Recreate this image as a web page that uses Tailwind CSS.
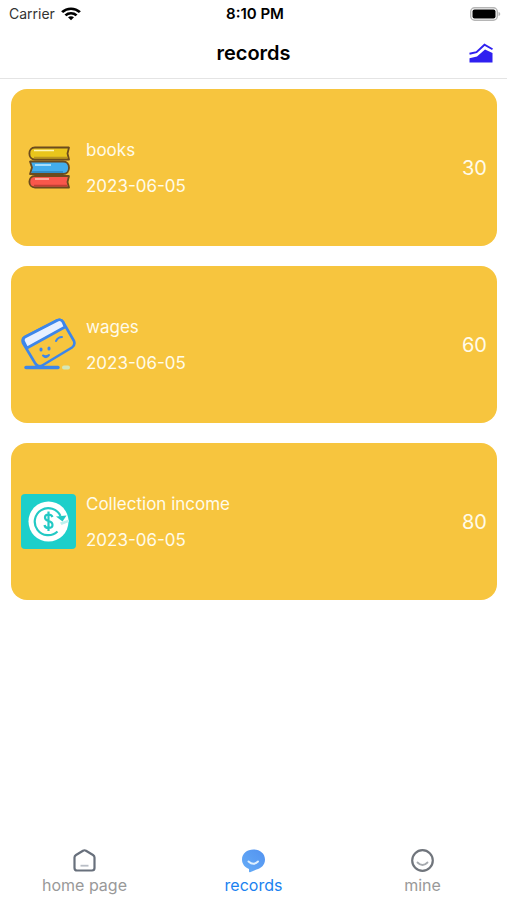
<!DOCTYPE html>
<html lang="en">
<head>
  <meta charset="UTF-8"/>
  <meta name="viewport" content="width=device-width, initial-scale=1.0"/>
  <title>records</title>
  <script src="https://cdn.jsdelivr.net/npm/@tailwindcss/browser@4"></script>
</head>
<body class="bg-white font-['Inter','Liberation_Sans',sans-serif] text-black">
  <div class="flex min-h-screen flex-col">

    <!-- Status Bar -->
    <div class="grid h-7 grid-cols-3 items-center pl-[9px] pr-[6px] pb-px text-sm">
      <div class="flex items-center gap-1.5 text-[#333]">
        <span>Carrier</span>
        <svg class="h-[14px] w-[20px]" viewBox="0 0 18 14" preserveAspectRatio="none" fill="none" stroke="#000" stroke-width="2.500">
          <path d="M1 5.200C5.500 .6 12.500 .6 17 5.200"/>
          <path d="M4 8.300C6.900 5.500 11.100 5.500 14 8.300"/>
          <path d="M6.300 10.300C7.900 8.900 10.100 8.900 11.700 10.300L9 13.200Z" fill="#000" stroke="none"/>
        </svg>
      </div>
      <div class="text-center text-[15px] font-semibold">8:10 PM</div>
      <svg class="h-[14px] w-[31px] justify-self-end" viewBox="0 0 31 14">
        <rect x=".7" y=".7" width="26.600" height="12.600" rx="4" fill="#fff" stroke="#b5b5b5" stroke-width="1.400"/>
        <rect x="2.500" y="2.500" width="23" height="9" rx="2" fill="#000"/>
        <path d="M28.500 5C30.800 5.500 30.800 8.500 28.500 9Z" fill="#b5b5b5"/>
      </svg>
    </div>

    <!-- Header -->
    <header class="grid grid-cols-[24px_1fr_24px] items-center border-b border-[#e4e4e4] px-[14px] pt-px pb-px">
      <span></span>
      <h1 class="py-2.5 text-center text-xl leading-7 font-semibold">records</h1>
      <button type="button" aria-label="Statistics">
        <svg class="h-5 w-6" viewBox="0 0 24 20">
          <path d="M.5 19.500V15.200L8 13.600L16 6.500L23.500 10V19.500Z" fill="#2f20f0"/>
          <path d="M.5 10.800L7.500 9.200L15.500 1.700L23.500 6.300" fill="none" stroke="#2f20f0" stroke-width="1.900"/>
        </svg>
      </button>
    </header>

    <!-- Records List -->
    <main class="flex flex-1 flex-col gap-5 px-[10px] py-[10px] pl-[11px]">
      <article class="flex min-h-[157px] items-center gap-2.5 rounded-2xl bg-[#f7c53e] px-2.5 text-[#fffbea]">
        <svg class="size-[55px] shrink-0" viewBox="0 0 55 55" stroke="#6b4b1e" stroke-width="1.800" stroke-linejoin="round">
          <path d="M48 7.500H14C6.500 7.500 6.500 19.500 14 19.500H48L46.500 13.500Z" fill="#e9c51c"/>
          <path d="M9 21.500H42C50 21.500 50 34 42 34H9L11 27.500Z" fill="#43adec"/>
          <path d="M48 36H14C6.500 36 6.500 47.500 14 47.500H48L46.500 42Z" fill="#f9574b"/>
          <g fill="none" stroke-width="1.500">
            <path d="M13 10.500H33" stroke="#fff6b5"/>
            <path d="M14 25H30" stroke="#c9efff"/>
            <path d="M14 39H28" stroke="#ffc4b6"/>
            <path d="M13 17.500H46" stroke="#b89423"/>
            <path d="M11 32H42" stroke="#2b84bd"/>
            <path d="M13 45.500H46" stroke="#c23f35"/>
          </g>
        </svg>
        <div class="flex flex-1 flex-col gap-3 text-[17px] leading-6">
          <h2>books</h2>
          <p>2023-06-05</p>
        </div>
        <span class="text-xl">30</span>
      </article>

      <article class="flex min-h-[157px] items-center gap-2.5 rounded-2xl bg-[#f7c53e] px-2.5 text-[#fffbea]">
        <svg class="size-[55px] shrink-0" viewBox="0 0 55 55" fill="none" stroke="#3d86ea" stroke-width="2.600" stroke-linecap="round" stroke-linejoin="round">
          <path d="M4 20L36 3.500Q40 1.500 42 5L53 24Q54.500 28 51 30.500L22 48Q17 51 14 46L2 26Q.5 22 4 20Z"/>
          <path d="M2.500 24Q2 21 4 20L36 3.500Q40 1.500 42 5L44 10L6 31Z" fill="#e8f0ff"/>
          <path d="M20 32V33M28 31V32" stroke-width="3"/>
          <path d="M22 38.500Q25.500 42 28 38Q25 40 22 38.500M35 24Q37 20 41 20" stroke-width="2"/>
          <path d="M5 50.500H37" stroke-width="3.400"/>
          <path d="M43 50.500H47" stroke="#d5e7b8" stroke-width="4"/>
        </svg>
        <div class="flex flex-1 flex-col gap-3 text-[17px] leading-6">
          <h2>wages</h2>
          <p>2023-06-05</p>
        </div>
        <span class="text-xl">60</span>
      </article>

      <article class="flex min-h-[157px] items-center gap-2.5 rounded-2xl bg-[#f7c53e] px-2.5 text-[#fffbea]">
        <svg class="size-[55px] shrink-0" viewBox="0 0 55 55" fill="none" stroke="#22c9c4" stroke-width="2.200">
          <rect width="55" height="55" rx="4" fill="#1dcfca" stroke="none"/>
          <circle cx="27.500" cy="27.500" r="20" fill="#fff" stroke="none"/>
          <path d="M36.500 37.500A13.500 13.500 0 1 1 39.500 22"/>
          <path d="M35 22.500L45.500 21.500L41.500 27.500Z" fill="#22c9c4" stroke="none"/>
          <path d="M39 28.500L48 25.500V28L40.500 31Z" fill="#bdf1ee" stroke="none"/>
          <path d="M31.500 23Q30.500 20.500 27.500 20.500Q24 20.500 24 23.500Q24 26 27.500 27Q31.500 28 31.500 31Q31.500 34 27.500 34Q24 34 23.500 31M27.500 17.500V37"/>
        </svg>
        <div class="flex flex-1 flex-col gap-3 text-[17px] leading-6">
          <h2>Collection income</h2>
          <p>2023-06-05</p>
        </div>
        <span class="text-xl">80</span>
      </article>
    </main>

    <!-- Tab Bar -->
    <nav class="grid grid-cols-3 pb-[3px] text-base leading-6 text-[#999]">
      <a href="#" class="flex flex-col items-center">
        <svg class="size-[25px]" viewBox="0 0 25 25" fill="none" stroke="#68707c" stroke-width="2.200" stroke-linejoin="round">
          <path d="M2.500 9.500Q2.500 8 4 7L11 2.700Q12.500 1.800 14 2.700L21 7Q22.500 8 22.500 9.500V20Q22.500 22.500 20 22.500H5Q2.500 22.500 2.500 20Z"/>
          <path d="M8.500 17.700H16.500" stroke="#b9bec6" stroke-width="1.800"/>
        </svg>
        home page
      </a>
      <a href="#" class="flex flex-col items-center text-[#1a82f0]" aria-current="page">
        <svg class="size-[25px]" viewBox="0 0 25 25" fill="none">
          <defs>
            <linearGradient id="bubble" x1="0" y1="1" x2="1" y2="0">
              <stop offset="0" stop-color="#66adf7"/>
              <stop offset="1" stop-color="#5292f0"/>
            </linearGradient>
          </defs>
          <path d="M12.500 1.500C19 1.500 24 5.500 24 11.500C24 17 20 20.500 15.500 21.500L9 24.300Q8 24.500 8 23.500V21C4 19.500 1 16 1 11.500C1 5.500 6 1.500 12.500 1.500Z" fill="url(#bubble)"/>
          <path d="M7.500 13.500Q12.500 18 17 13.500" stroke="#dff0ff" stroke-width="1.900" stroke-linecap="round"/>
        </svg>
        records
      </a>
      <a href="#" class="flex flex-col items-center">
        <svg class="size-[25px]" viewBox="0 0 25 25" fill="none" stroke-linecap="round">
          <circle cx="12.500" cy="12.500" r="10.300" stroke="#70757c" stroke-width="2.200"/>
          <path d="M7.500 14.500Q12.500 19.500 17.500 14.500" stroke="#a5a9ae" stroke-width="1.800"/>
        </svg>
        mine
      </a>
    </nav>
  </div>
</body>
</html>
